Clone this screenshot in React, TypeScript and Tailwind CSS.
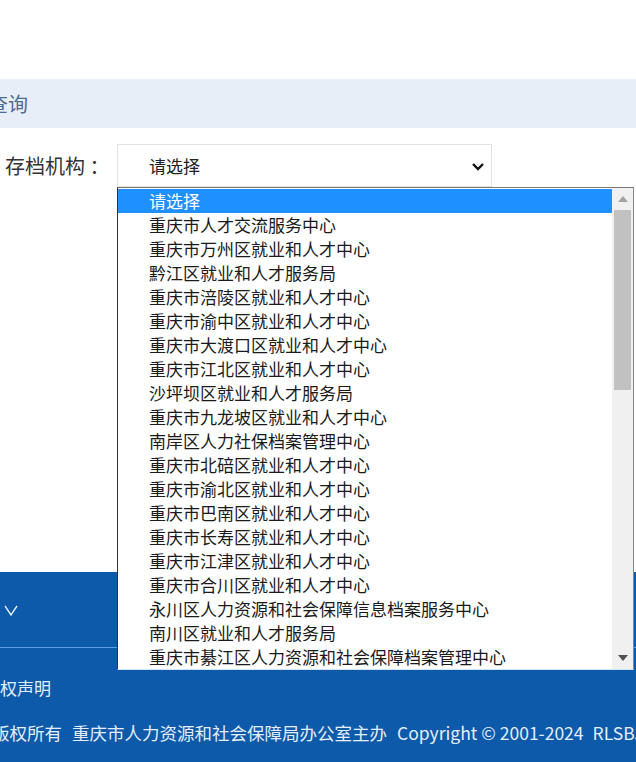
const options = [
  "请选择",
  "重庆市人才交流服务中心",
  "重庆市万州区就业和人才中心",
  "黔江区就业和人才服务局",
  "重庆市涪陵区就业和人才中心",
  "重庆市渝中区就业和人才中心",
  "重庆市大渡口区就业和人才中心",
  "重庆市江北区就业和人才中心",
  "沙坪坝区就业和人才服务局",
  "重庆市九龙坡区就业和人才中心",
  "南岸区人力社保档案管理中心",
  "重庆市北碚区就业和人才中心",
  "重庆市渝北区就业和人才中心",
  "重庆市巴南区就业和人才中心",
  "重庆市长寿区就业和人才中心",
  "重庆市江津区就业和人才中心",
  "重庆市合川区就业和人才中心",
  "永川区人力资源和社会保障信息档案服务中心",
  "南川区就业和人才服务局",
  "重庆市綦江区人力资源和社会保障档案管理中心",
];

const font = { fontFamily: '"Noto Sans CJK SC", "Noto Sans", sans-serif' };

export default function App() {
  return (
    <div className="relative flex h-[762px] w-[636px] flex-col overflow-hidden bg-white" style={font}>
      <div className="h-[79px] shrink-0" />

      <div className="flex h-[49px] shrink-0 items-center overflow-hidden bg-[#e7eef8]">
        <span className="ml-[-12px] text-[20px] text-[#4d6c90]">查询</span>
      </div>

      <div className="mt-[16px] flex shrink-0 items-center">
        <span className="w-[117px] pl-[5px] text-[20px] text-[#333]">存档机构 ：</span>
        <div className="flex h-[43px] w-[375px] items-center justify-between border border-[#e2e2e2] pl-[31px] pr-[6px]">
          <span className="text-[17px] text-[#222]">请选择</span>
          <svg width="14" height="10" viewBox="0 0 14 10">
            <polyline points="2,3 7,8 12,3" fill="none" stroke="#111" strokeWidth="2.4" />
          </svg>
        </div>
      </div>

      <div className="flex-1" />

      <footer className="h-[190px] shrink-0 bg-[#0c5aa9] text-[#e4eefa]">
        <div className="flex h-[75px] items-center pl-[4px]">
          <svg width="14" height="14" viewBox="0 0 14 14">
            <polyline points="1,3 7,12 13,3" fill="none" stroke="#e4eefa" strokeWidth="1.4" />
          </svg>
        </div>
        <div className="h-px bg-[#5d9ce2]" />
        <div className="flex h-[80px] items-center">
          <span className="ml-[-17px] text-[17px]">版权声明</span>
        </div>
        <div className="mt-[-8px] flex items-center whitespace-nowrap text-[17.5px]">
          <span className="ml-[-8px]">版权所有</span>
          <span className="ml-[10px]">重庆市人力资源和社会保障局办公室主办</span>
          <span className="ml-[10px]">Copyright © 2001-2024</span>
          <span className="ml-[9px]">RLSBJ.CQ.GOV.CN</span>
        </div>
      </footer>

      <div className="absolute left-[117px] top-[187px] flex h-[483px] w-[517px] border border-l-[#333] border-r-[#888] border-t-[#777] border-b-[#cfe4f8] bg-white">
        <div className="flex-1 pt-px">
          {options.map((o, i) => (
            <div
              key={o}
              className={
                "h-[24px] whitespace-nowrap pl-[31px] text-[17px] leading-[24px] " +
                (i === 0 ? "bg-[#1e90ff] text-white" : "text-[#1a1a1a]")
              }
            >
              {o}
            </div>
          ))}
        </div>
        <div className="flex w-[21px] flex-col items-center bg-[#f0f0f0]">
          <div className="flex h-[22px] items-center justify-center">
            <svg width="10" height="6" viewBox="0 0 10 6">
              <polygon points="0,6 5,0 10,6" fill="#a3a3a3" />
            </svg>
          </div>
          <div className="h-[180px] w-[17px] bg-[#c1c1c1]" />
          <div className="flex-1" />
          <div className="flex h-[22px] items-center justify-center">
            <svg width="10" height="6" viewBox="0 0 10 6">
              <polygon points="0,0 10,0 5,6" fill="#505050" />
            </svg>
          </div>
        </div>
      </div>
    </div>
  );
}
